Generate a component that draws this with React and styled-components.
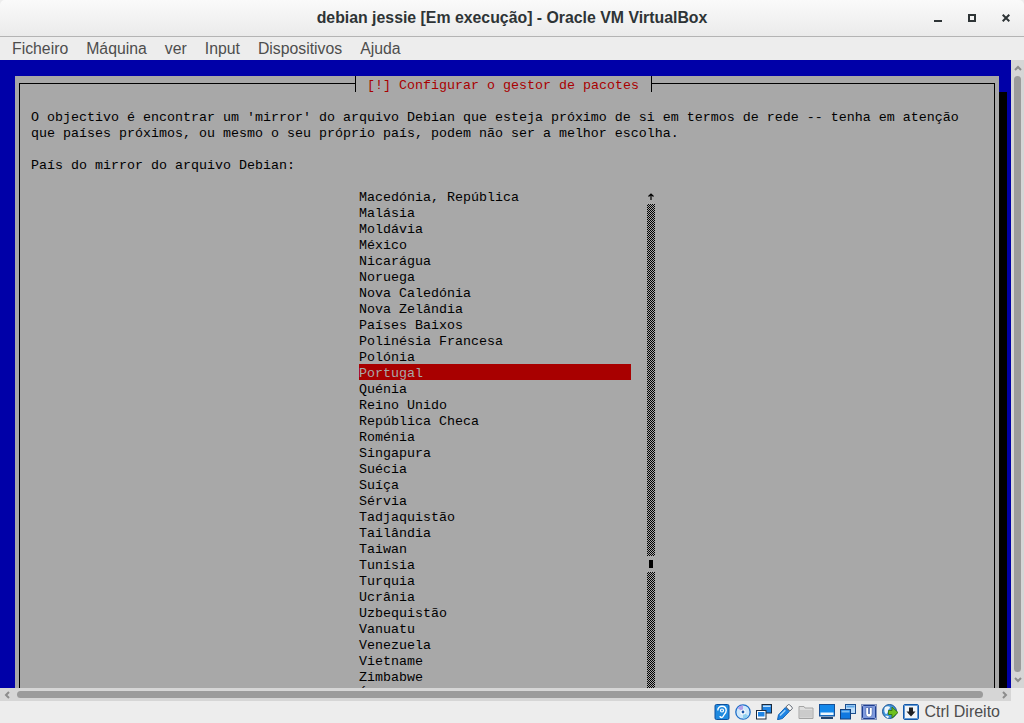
import React from 'react'
import styled, { createGlobalStyle } from 'styled-components'

const GlobalStyle = createGlobalStyle`
html, body {
  margin: 0;
  padding: 0;
  background: #ededed;
  overflow: hidden;
}
`

const vars = {
  blue: '#0000a8',
  gray: '#a8a8a8',
  red: '#a80000',
  chrome: '#ededed',
  track: '#d6d6d6',
  thumb: '#9b9b9b',
}

const menus = ['Ficheiro', 'Máquina', 'ver', 'Input', 'Dispositivos', 'Ajuda']

const countries = [
  'Macedónia, República', 'Malásia', 'Moldávia', 'México', 'Nicarágua', 'Noruega',
  'Nova Caledónia', 'Nova Zelândia', 'Países Baixos', 'Polinésia Francesa', 'Polónia',
  'Portugal', 'Quénia', 'Reino Unido', 'República Checa', 'Roménia', 'Singapura',
  'Suécia', 'Suíça', 'Sérvia', 'Tadjaquistão', 'Tailândia', 'Taiwan', 'Tunísia',
  'Turquia', 'Ucrânia', 'Uzbequistão', 'Vanuatu', 'Venezuela', 'Vietname', 'Zimbabwe',
  'África do Sul',
]

const HdIcon = () => (
  <svg width="16" height="16" viewBox="0 0 16 16">
    <rect x="1" y="0.500" width="14" height="15" rx="1.500" fill="#1f8ae0" stroke="#0b4f9e" />
    <path d="M3.800 6.500C3.800 3.500 6 2.300 8 2.300c2.700 0 4.200 1.900 4.200 4.300 0 2-1 3-2 4-.8.900-1 2.900-2.500 2.900-1.200 0-1.700-.8-1.700-1.500" fill="none" stroke="#fff" strokeWidth="1.400" />
    <circle cx="8" cy="6.500" r="1.500" fill="none" stroke="#fff" strokeWidth="1.200" />
  </svg>
)

const CdIcon = () => (
  <svg width="16" height="16" viewBox="0 0 16 16">
    <circle cx="8" cy="8" r="7.200" fill="#cfe8fa" stroke="#1f6fc8" strokeWidth="1.300" />
    <path d="M8 8L2.500 4A7 7 0 0 1 8 1.200z" fill="#b49fe8" />
    <path d="M8 8l5.500 4A7 7 0 0 1 8 14.800z" fill="#8fd0f0" />
    <circle cx="8" cy="8" r="2.600" fill="#fff" />
    <circle cx="8" cy="8" r="1.400" fill="#1a55a8" />
  </svg>
)

const NetworkIcon = () => (
  <svg width="16" height="16" viewBox="0 0 16 16">
    <rect x="6" y="0.500" width="9.500" height="8.500" fill="#1f84e4" stroke="#1c2a3c" />
    <rect x="7" y="1.500" width="7.500" height="1.500" fill="#bfe0fa" />
    <rect x="0.500" y="6.500" width="9.500" height="8.500" fill="#fff" stroke="#1c2a3c" />
    <rect x="2" y="8" width="6.500" height="4.500" fill="#1f84e4" />
  </svg>
)

const UsbIcon = () => (
  <svg width="16" height="16" viewBox="0 0 16 16">
    <path d="M0.500 15.800l1-5 6.800-7.300 4 4-6.800 7z" fill="#1f84e4" stroke="#0d5cae" strokeWidth="0.900" />
    <path d="M3 11.500l5.300-5.300" stroke="#a9d8fa" strokeWidth="1.400" />
    <path d="M9 2.800l2.400-2.200c.9-.5 4.300 2.600 3.900 3.900L13 7z" fill="#f8f8f8" stroke="#4f5864" strokeWidth="0.900" />
  </svg>
)

const FolderIcon = () => (
  <svg width="16" height="16" viewBox="0 0 16 16">
    <path d="M1 2.500h5l1 1.500h8v10.500H1z" fill="#dedede" stroke="#a4a4a4" />
    <rect x="2" y="6" width="12" height="7.500" fill="#cbcbcb" />
  </svg>
)

const DisplayIcon = () => (
  <svg width="16" height="16" viewBox="0 0 16 16">
    <rect x="0.500" y="0.500" width="15" height="11.500" fill="#1488ea" stroke="#174f94" />
    <rect x="1.500" y="8.500" width="13" height="2.500" fill="#eef7fe" />
    <rect x="2" y="13" width="12" height="2" fill="#22446e" />
  </svg>
)

const StackIcon = () => (
  <svg width="16" height="16" viewBox="0 0 16 16">
    <rect x="5.500" y="0.500" width="10" height="9" fill="#bcdcf8" stroke="#1d4f8f" />
    <rect x="6.500" y="1.500" width="8" height="2" fill="#5fa6e6" />
    <rect x="0.500" y="5.500" width="10" height="9.500" fill="#0f78e0" stroke="#123f7c" />
    <rect x="1.500" y="6.500" width="8" height="2" fill="#7cbcf0" />
  </svg>
)

const ChipIcon = () => (
  <svg width="16" height="16" viewBox="0 0 16 16">
    <rect x="0.500" y="0.500" width="15" height="15" fill="none" stroke="#1f3f90" strokeDasharray="1 1" />
    <rect x="1.500" y="1.500" width="13" height="13" rx="1" fill="#7f9ade" stroke="#1f3f90" />
    <path d="M4.800 3.500h6.400v6.500a3.200 3.200 0 0 1-6.400 0z" fill="#fff" stroke="#3f5eac" strokeWidth="0.700" />
    <rect x="7.200" y="4" width="1.600" height="6" fill="#3f5eac" />
  </svg>
)

const GlobeIcon = () => (
  <svg width="16" height="16" viewBox="0 0 16 16">
    <circle cx="7.500" cy="7.500" r="7" fill="#3f94d8" stroke="#1f5596" />
    <path d="M3 3c2-1 4-1 5 0 0 2-2 2-2 4 0 1.500-1 3-2 3S1.500 6 3 3z" fill="#eef5fb" />
    <path d="M3 12c1.500-.5 3-.5 4 .5l-1 2z" fill="#eef5fb" />
    <path d="M6.500 6.500h3.500V3l6 5.500-6 5.500v-3.500H6.500z" fill="#6fc11f" stroke="#35740e" strokeWidth="0.900" />
  </svg>
)

const DownIcon = () => (
  <svg width="16" height="16" viewBox="0 0 16 16">
    <rect x="0.500" y="0.500" width="15" height="15" rx="1.500" fill="#f0f4f8" stroke="#1257a8" />
    <rect x="1.500" y="1.500" width="13" height="13" fill="none" stroke="#5f97d4" />
    <path d="M6 3.500h4v4h2.500L8 12.500 3.500 7.500H6z" fill="#1f2125" />
  </svg>
)

const App = () => {
  return (
    <Window>
      <GlobalStyle />
      <TitleBar>
        <span />
        <Title>debian jessie [Em execução] - Oracle VM VirtualBox</Title>
        <WindowButtons>
          <svg width="8" height="8" viewBox="0 0 8 8"><rect x="0" y="6" width="8" height="2" fill="#2e3436" /></svg>
          <svg width="8" height="8" viewBox="0 0 8 8"><path d="M1 1h6v6H1z" fill="none" stroke="#2e3436" strokeWidth="2" /></svg>
          <svg width="8" height="8" viewBox="0 0 8 8"><path d="M.7.700l6.600 6.600M7.300.700L.7 7.300" fill="none" stroke="#2e3436" strokeWidth="2" /></svg>
        </WindowButtons>
      </TitleBar>

      <MenuBar>
        {menus.map((menu) => <MenuItem key={menu}>{menu}</MenuItem>)}
      </MenuBar>

      <ConsoleRow>
        <Viewport>
          <Panel>
            <Frame>
              <DialogTitle>[!] Configurar o gestor de pacotes</DialogTitle>
              <Paragraph>{`O objectivo é encontrar um 'mirror' do arquivo Debian que esteja próximo de si em termos de rede -- tenha em atenção
que países próximos, ou mesmo o seu próprio país, podem não ser a melhor escolha.`}</Paragraph>
              <Paragraph>País do mirror do arquivo Debian:</Paragraph>
              <ListBox>
                <Countries>
                  {countries.map((country) => (
                    <Country key={country} $selected={country === 'Portugal'}>{country}</Country>
                  ))}
                </Countries>
                <ListScroll>
                  <ListArrow>
                    <svg width="6" height="7" viewBox="0 0 6 7"><path d="M3 7V1M.5 3.500L3 1l2.500 2.500" fill="none" stroke="#000" strokeWidth="1.200" /></svg>
                  </ListArrow>
                  <ListTrack $rows={22} />
                  <ListThumb><span /></ListThumb>
                  <ListTrack $rows={8} />
                </ListScroll>
              </ListBox>
            </Frame>
          </Panel>
        </Viewport>
        <VScrollbar>
          <ScrollArrow>
            <svg width="8" height="6" viewBox="0 0 8 6"><path d="M1 5l3-3 3 3" fill="none" stroke="#8c8c8c" strokeWidth="2" /></svg>
          </ScrollArrow>
          <VThumb />
          <ScrollArrow>
            <svg width="8" height="6" viewBox="0 0 8 6"><path d="M1 1l3 3 3-3" fill="none" stroke="#8c8c8c" strokeWidth="2" /></svg>
          </ScrollArrow>
        </VScrollbar>
      </ConsoleRow>

      <HScrollRow>
        <HScrollbar>
          <HArrow>
            <svg width="6" height="8" viewBox="0 0 6 8"><path d="M5 1L2 4l3 3" fill="none" stroke="#8c8c8c" strokeWidth="2" /></svg>
          </HArrow>
          <HThumb />
          <HArrow>
            <svg width="6" height="8" viewBox="0 0 6 8"><path d="M1 1l3 3-3 3" fill="none" stroke="#8c8c8c" strokeWidth="2" /></svg>
          </HArrow>
        </HScrollbar>
      </HScrollRow>

      <StatusBar>
        <HdIcon />
        <CdIcon />
        <NetworkIcon />
        <UsbIcon />
        <FolderIcon />
        <DisplayIcon />
        <StackIcon />
        <ChipIcon />
        <GlobeIcon />
        <DownIcon />
        <HostKey>Ctrl Direito</HostKey>
      </StatusBar>
    </Window>
  )
}

const Window = styled.div`
display: flex;
flex-direction: column;
width: 1024px;
height: 723px;
overflow: hidden;
background: ${vars.chrome};
font-family: 'Liberation Sans', Arial, sans-serif;
`

const TitleBar = styled.div`
flex: none;
display: grid;
grid-template-columns: 1fr auto 1fr;
align-items: center;
height: 36px;
background: linear-gradient(#fafafa, #ebebeb);
border-bottom: 1px solid #b4b4b4;
border-radius: 5px 5px 0 0;
`

const Title = styled.div`
font-size: 15.85px;
font-weight: 700;
color: #2e3436;
white-space: nowrap;
`

const WindowButtons = styled.div`
justify-self: end;
display: flex;
gap: 26px;
padding-right: 14px;

svg {
  display: block;
}
`

const MenuBar = styled.div`
flex: none;
display: flex;
align-items: center;
height: 23px;
padding-left: 3px;
background: ${vars.chrome};
`

const MenuItem = styled.div`
padding: 0 9px;
font-size: 15.8px;
color: #4d4d4d;
white-space: nowrap;
`

const ConsoleRow = styled.div`
flex: none;
display: flex;
height: 628px;
`

const Viewport = styled.div`
flex: none;
width: 1011px;
height: 628px;
overflow: hidden;
box-sizing: border-box;
padding: 16px 0 0 15px;
background: ${vars.blue};
`

const Panel = styled.div`
box-sizing: border-box;
width: 984px;
height: 640px;
padding: 7px 4px 0;
background: ${vars.gray};
box-shadow: 8px 16px 0 #000;
`

const Frame = styled.div`
position: relative;
box-sizing: border-box;
height: 100%;
padding: 26px 11px 0;
border: 1px solid #000;
font-family: 'Liberation Mono', monospace;
font-size: 13.33px;
line-height: 16px;
color: #000;
`

const DialogTitle = styled.div`
position: absolute;
top: -8px;
left: 335px;
box-sizing: border-box;
height: 16px;
padding: 2px 12px 0 11px;
border-left: 1px solid #000;
border-right: 1px solid #000;
background: ${vars.gray};
color: ${vars.red};
white-space: pre;
`

const Paragraph = styled.div`
margin: 0 0 16px;
white-space: pre;
`

const ListBox = styled.div`
display: flex;
gap: 16px;
margin: -2px 0 0 328px;
`

const Countries = styled.div`
width: 272px;
`

const Country = styled.div`
height: 16px;
line-height: 20px;
white-space: pre;
background: ${(props) => (props.$selected ? vars.red : 'transparent')};
color: ${(props) => (props.$selected ? vars.gray : '#000')};
`

const ListScroll = styled.div`
width: 8px;
`

const ListArrow = styled.div`
display: flex;
justify-content: center;
height: 16px;
padding-top: 5px;
box-sizing: border-box;

svg {
  display: block;
}
`

const ListTrack = styled.div`
height: ${(props) => props.$rows * 16}px;
background: repeating-conic-gradient(#000 0 25%, ${vars.gray} 0 50%) 0 0 / 2px 2px;
`

const ListThumb = styled.div`
display: flex;
align-items: center;
justify-content: center;
height: 16px;

span {
  width: 4px;
  height: 8px;
  background: #000;
}
`

const VScrollbar = styled.div`
flex: none;
display: flex;
flex-direction: column;
align-items: center;
width: 13px;
height: 628px;
background: ${vars.track};
`

const ScrollArrow = styled.div`
flex: none;
display: flex;
align-items: center;
justify-content: center;
height: 16px;
`

const VThumb = styled.div`
flex: 1;
width: 7px;
border-radius: 4px;
background: ${vars.thumb};
`

const HScrollRow = styled.div`
flex: none;
height: 13px;
`

const HScrollbar = styled.div`
display: flex;
align-items: center;
width: 1011px;
height: 13px;
background: ${vars.track};
`

const HArrow = styled.div`
flex: none;
display: flex;
align-items: center;
justify-content: center;
width: 13px;
`

const HThumb = styled.div`
flex: none;
height: 7px;
width: 966px;
margin: 0 15px 0 4px;
border-radius: 4px;
background: ${vars.thumb};
`

const StatusBar = styled.div`
flex: 1;
display: flex;
align-items: center;
justify-content: flex-end;
gap: 5px;
padding-right: 24px;
background: ${vars.chrome};
`

const HostKey = styled.div`
font-size: 16px;
color: #4d4d4d;
white-space: nowrap;
`

export default App
